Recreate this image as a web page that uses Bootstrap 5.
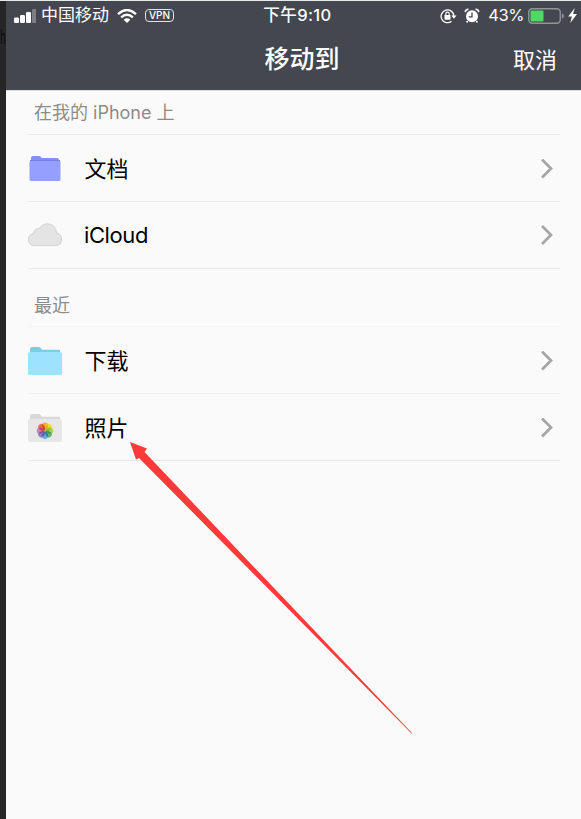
<!DOCTYPE html>
<html lang="zh-CN">
<head>
<meta charset="utf-8">
<meta name="viewport" content="width=device-width, initial-scale=1">
<title>移动到</title>
<link rel="stylesheet" href="https://cdn.jsdelivr.net/npm/bootstrap@5.3.0/dist/css/bootstrap.min.css">
<style>
body{font-family:Inter,"Noto Sans CJK SC",sans-serif;background:#fafafa;color:#000}
.screen{height:819px;border-top:1px solid #e3ece8}
.edge{width:6px;background:#262626;font-size:20px;line-height:24px;padding-top:24px;color:#0c0c0c}
.edge span{display:inline-block;transform:scaleX(.5);transform-origin:0 50%}
.app-header{height:90px;background:#444750;border-bottom:1px solid #dcdddf;color:#fff}
.status{height:29px;font-size:17px;line-height:29px}
.status svg,.entry svg{display:block;flex:none}
.carrier{margin-left:5px;width:68px}
.vpn{margin-left:8px;width:29px;height:13px;border:1px solid #e4e5e6;border-radius:4px;font-size:10px;line-height:11px;font-weight:500;text-align:center}
.clock{font-weight:500;font-size:16.5px;letter-spacing:.4px}
.orientation{margin-right:7px}
.percent{margin-left:8px;margin-right:4px;font-size:16.5px;letter-spacing:-.4px}
.bolt{margin-left:3px;margin-right:4px}
.title-row{height:60px;display:grid;grid-template-columns:1fr auto 1fr;padding:0 24px 0 41px}
.title-row h1{font-size:25px;line-height:59px;font-weight:500}
.title-row a{font-size:22px;line-height:60px;color:#fff}
.listing{padding:0 21px 0 22px}
.section-label{font-size:18px;color:#8c8c8c;padding-left:6px;border-bottom:1px solid #e7e8e8}
.label-a{height:44px;line-height:44px}
.label-b{height:58px;line-height:74px;border-color:#f5f5f5}
.entry{height:67px;border-bottom:1px solid #e7e8e8;font-size:22px;padding:1px 7px 0 0}
.entry.faint{border-color:#f0f0f0}
.entry.upper{padding-top:0}
.entry .name{margin-left:22.5px;line-height:66px}
.entry .latin{margin-left:22px;letter-spacing:-.4px}
.pointer{left:0;top:0;pointer-events:none}
</style>
<script src="https://cdn.jsdelivr.net/npm/bootstrap@5.3.0/dist/js/bootstrap.bundle.min.js"></script>
</head>
<body class="overflow-hidden">
<div class="screen d-flex position-relative overflow-hidden">
  <div class="edge flex-shrink-0"><span>h</span></div>
  <div class="flex-grow-1">
    <header class="app-header">
      <div class="status row g-0 flex-nowrap">
        <div class="col d-flex align-items-center ps-2">
          <svg width="22" height="14" viewBox="0 0 22 14" fill="#fff"><rect x="0" y="8.5" width="5" height="5.5" rx="1.2"/><rect x="6" y="6" width="5" height="8" rx="1.2"/><rect x="12" y="3" width="5" height="11" rx="1.2"/><rect x="18" y="0" width="4.5" height="14" rx="1.2" opacity=".3"/></svg>
          <span class="carrier text-nowrap">中国移动</span>
          <svg class="ms-2" width="20" height="14" viewBox="0 0 20 14" fill="none" stroke="#fff"><path d="M1 5.1Q10-3 19 5.1" stroke-width="2.5"/><path d="M4.1 8.4Q10 3.2 15.9 8.4" stroke-width="2.4"/><path d="M10 14L6.7 10.7Q10 7.9 13.3 10.7Z" fill="#fff" stroke="none"/></svg>
          <span class="vpn">VPN</span>
        </div>
        <div class="clock col-auto">下午9:10</div>
        <div class="col d-flex align-items-center justify-content-end">
          <svg class="orientation" width="17" height="16" viewBox="0 0 17 16" fill="none" stroke="#fff"><path d="M11.5 13.3A6.4 6.4 0 1 1 13.9 8" stroke-width="1.3"/><path d="M11.3 7.6H16.5L13.9 10.7Z" fill="#fff" stroke="none"/><rect x="4.5" y="7" width="6" height="4.7" rx=".6" fill="#fff" stroke="none"/><path d="M5.8 7.2V5.8a1.7 1.7 0 0 1 3.4 0v1.4" stroke-width="1.1"/></svg>
          <svg width="16" height="16" viewBox="0 0 16 16"><circle cx="8" cy="8.2" r="6" fill="#fff"/><path d="M1.2 4.2Q1.5 1.4 4.5 1.3M14.8 4.2Q14.5 1.4 11.5 1.3M3.8 13l-1.2 1.5M12.2 13l1.2 1.5" stroke="#fff" stroke-width="1.5" fill="none"/><path d="M8 4.5V8.8H4.7" stroke="#444750" stroke-width="1.3" fill="none"/></svg>
          <span class="percent">43%</span>
          <svg width="37" height="16" viewBox="0 0 37 16"><rect x=".75" y=".75" width="31.5" height="14.5" rx="3.5" fill="none" stroke="#92949a" stroke-width="1.4"/><path d="M34 5.3Q36 6.2 36 8T34 10.7Z" fill="#92949a"/><rect x="2.5" y="2.5" width="13" height="11" rx="1" fill="#4cd964"/></svg>
          <svg class="bolt" width="9" height="15" viewBox="0 0 9 15"><path d="M6.7 0L.2 8.4H3.9L2.3 15L9 6.1H5.1Z" fill="#fff"/></svg>
        </div>
      </div>
      <div class="title-row">
        <span></span><h1 class="m-0">移动到</h1><a class="text-decoration-none text-end" href="#">取消</a>
      </div>
    </header>
    <main class="listing">
      <div class="section-label label-a">在我的 iPhone 上</div>
      <div class="entry d-flex align-items-center">
        <svg width="34" height="28" viewBox="0 0 34 28"><path d="M3 7V3Q3 1 5 1H11Q13 1 13.5 3H29Q31 3 31 5V7Z" fill="#8291f0"/><path d="M1.5 7Q1.5 5.5 3 5.5H31Q32.5 5.5 32.5 7V24.5Q32.5 26 31 26H3Q1.5 26 1.5 24.5Z" fill="#959fff"/><path d="M2 5.5H32" stroke="#7380dd"/></svg>
        <span class="name">文档</span>
        <svg class="ms-auto" width="13" height="20" viewBox="0 0 13 20"><path d="M2 .5L11 9.500L2 18.500" fill="none" stroke="#a5a5a5" stroke-width="2.7"/></svg>
      </div>
      <div class="entry upper d-flex align-items-center">
        <svg width="34" height="24" viewBox="0 0 34 24"><path d="M5 22.5Q.5 21.5 .5 16.5Q.5 11.5 5.6 10.2Q6 5.3 11.8 5.2Q14.5.8 19.3.8Q27.5 1 28.7 10Q33.5 11.4 33.5 16Q33.5 22.5 28 22.5Z" fill="#e4e4e4" stroke="#d3d3d3"/></svg>
        <span class="name latin">iCloud</span>
        <svg class="ms-auto" width="13" height="20" viewBox="0 0 13 20"><path d="M2 1L11 10L2 19" fill="none" stroke="#a5a5a5" stroke-width="2.7"/></svg>
      </div>
      <div class="section-label label-b">最近</div>
      <div class="entry faint d-flex align-items-center">
        <svg width="34" height="28" viewBox="0 0 34 28"><path d="M2 6V2Q2 0 4 0H11Q12.5 0 14 2.7H31Q32 2.7 32 4V6Z" fill="#79cdec"/><rect y="5" width="34" height="23" rx="1.8" fill="#9de3ff"/></svg>
        <span class="name">下载</span>
        <svg class="ms-auto" width="13" height="20" viewBox="0 0 13 20"><path d="M2 .5L11 9.500L2 18.500" fill="none" stroke="#a5a5a5" stroke-width="2.7"/></svg>
      </div>
      <div class="entry d-flex align-items-center">
        <svg width="34" height="28" viewBox="0 0 34 28"><path d="M2 6V2Q2 0 4 0H11Q12.5 0 14 2.7H31Q32 2.7 32 4V6Z" fill="#d9d9d9"/><rect y="5" width="34" height="23" rx="1.8" fill="#e7e7e7"/>
          <g transform="translate(17 16.7)"><rect x="-3" y="-8.3" width="6" height="8" rx="3" fill="#f9a733"/><rect transform="rotate(45)" x="-3" y="-8.3" width="6" height="8" rx="3" fill="#e9e130"/><rect transform="rotate(90)" x="-3" y="-8.3" width="6" height="8" rx="3" fill="#a9cf45" fill-opacity=".9"/><rect transform="rotate(135)" x="-3" y="-8.3" width="6" height="8" rx="3" fill="#4eae78" fill-opacity=".9"/><rect transform="rotate(180)" x="-3" y="-8.3" width="6" height="8" rx="3" fill="#609fda" fill-opacity=".9"/><rect transform="rotate(225)" x="-3" y="-8.3" width="6" height="8" rx="3" fill="#8175b9" fill-opacity=".9"/><rect transform="rotate(270)" x="-3" y="-8.3" width="6" height="8" rx="3" fill="#b879b3" fill-opacity=".85"/><rect transform="rotate(315)" x="-3" y="-8.3" width="6" height="8" rx="3" fill="#ec604a" fill-opacity=".9"/>
          <g stroke-width="1.7" stroke-linecap="round"><path d="M-1-2L-2.300-5" stroke="#d8402b"/><path d="M1-2L2.300-5" stroke="#d6b51c"/><path d="M2-1L5-2.300" stroke="#a9b91f"/><path d="M2 1L5 2.300" stroke="#4b983b"/><path d="M1 2L2.300 5" stroke="#267f91"/><path d="M-1 2L-2.300 5" stroke="#4266a7"/><path d="M-2 1L-5 2.300" stroke="#84509b"/><path d="M-2-1L-5-2.300" stroke="#bd3b62"/></g></g></svg>
        <span class="name">照片</span>
        <svg class="ms-auto" width="13" height="20" viewBox="0 0 13 20"><path d="M2 .5L11 9.500L2 18.500" fill="none" stroke="#a5a5a5" stroke-width="2.7"/></svg>
      </div>
    </main>
  </div>
  <svg class="pointer position-absolute" width="581" height="818" viewBox="0 1 581 818"><path d="M130 442L147 448.5L144.5 452L412 733L411.5 733.5L139 458L136 459.5Z" fill="#fc3a39"/></svg>
</div>
</body>
</html>
